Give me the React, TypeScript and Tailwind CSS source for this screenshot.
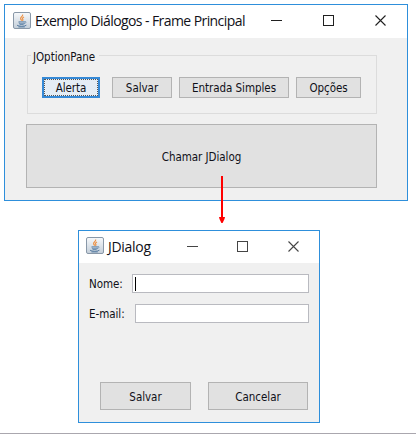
import type { ReactNode } from 'react';

function JavaIcon() {
  return (
    <svg width="18" height="18" viewBox="0 0 18 18" className="-mt-0.5 shrink-0">
      <defs>
        <linearGradient id="tile" x1="0" y1="0" x2="0" y2="1">
          <stop offset="0" stopColor="#f7f9fb" />
          <stop offset="1" stopColor="#c3ced9" />
        </linearGradient>
      </defs>
      <rect x="0.5" y="0.5" width="17" height="16" rx="1.5" fill="url(#tile)" stroke="#8998a8" />
      <path d="M9.6 2.5C10.4 4.3 7 5 7.6 6.8 7.8 7.6 8.6 8 8.6 8.8M11 5C9.4 5.8 9 6.6 9.8 7.4 10.1 7.9 9.9 8.4 9.5 8.8" fill="none" stroke="#ee9246" strokeWidth="1.2" />
      <path d="M5.5 9.3h6.2c0 1.6-.6 3-1.4 3.6H7c-.9-.6-1.5-2-1.5-3.6z" fill="#6f8faf" />
      <path d="M11.5 9.6c2.2-.6 2 1.5-.5 2.2" fill="none" stroke="#6f8faf" strokeWidth="0.9" />
      <path d="M4 13.2c1.8 1.4 7.6 1.4 9.4 0M5.4 14.9h6.4" fill="none" stroke="#5b7fa4" strokeWidth="1" />
      <path d="M6.3 10.8h4.6" stroke="#dbe5ee" strokeWidth="0.6" />
    </svg>
  );
}

function Controls({ light }: { light?: boolean }) {
  const c = light ? '#454545' : '#202020';
  return (
    <svg width="116" height="12" viewBox="0 0 116 12" fill="none" stroke={c} className="-mt-px shrink-0">
      <path d="M0 5.5h11" />
      <rect x={light ? 50.5 : 52.5} y="0.5" width="10" height="10" />
      <path d={light ? 'M101.5 0.5l10 10m0-10l-10 10' : 'M104.5 0.5l10 10m0-10l-10 10'} strokeWidth="1.1" />
    </svg>
  );
}

function Button({ className, children }: { className: string; children: ReactNode }) {
  return (
    <button className={`flex shrink-0 items-center justify-center border border-[#b3b3b3] bg-[#e1e1e1] pt-px whitespace-nowrap ${className}`}>
      {children}
    </button>
  );
}

export default function App() {
  return (
    <main className="relative flex h-[434px] w-[416px] flex-col overflow-hidden border-b border-[#aaa7ae] bg-white pt-1 font-['DejaVu_Sans_Condensed','DejaVu_Sans',sans-serif] text-[11.5px] leading-[14px] tracking-[-0.04px] text-[#101018] [font-stretch:75%]">
      <section className="ml-1 h-[197px] w-[404px] shrink-0 border border-[#2e8fdb] bg-[#f0f0f0]">
        <header className="flex h-[33px] items-center bg-white pl-2">
          <JavaIcon />
          <h1 className="-mt-0.5 ml-1 w-[236px] font-['Open_Sans',sans-serif] text-[14px] leading-5 tracking-[-0.58px] whitespace-nowrap [font-stretch:100%]">
            Exemplo Diálogos - Frame Principal
          </h1>
          <Controls />
        </header>
        <div className="px-[21px] pt-[17px]">
          <div className="ml-px h-[59px] w-[350px] border border-[#dcdcdc]">
            <h3 className="-mt-[6px] ml-[3px] h-[14px] w-[68px] bg-[#f0f0f0] px-[2px] whitespace-nowrap">JOptionPane</h3>
            <div className="mt-[13px] flex pl-[14px]">
              <button className="h-[21px] w-[58px] shrink-0 border-2 border-[#3589d6] bg-[#e5edf5]">
                <span className="flex h-full items-center justify-center border border-dotted border-[#555] pt-px">Alerta</span>
              </button>
              <Button className="ml-3 h-[21px] w-[60px]">Salvar</Button>
              <Button className="ml-[7px] h-[21px] w-[110px]">Entrada Simples</Button>
              <Button className="ml-[7px] h-[21px] w-[65px]">Opções</Button>
            </div>
          </div>
          <Button className="mt-[10px] h-16 w-[351px]">Chamar JDialog</Button>
        </div>
      </section>

      <section className="mt-[29px] ml-[78px] h-[193px] w-[242px] shrink-0 border border-[#2e8fdb] bg-[#f0f0f0]">
        <header className="flex h-8 items-center bg-white pl-[7px]">
          <JavaIcon />
          <h2 className="ml-1 w-[79px] font-['Open_Sans',sans-serif] text-[14px] leading-5 tracking-[-0.3px] whitespace-nowrap [font-stretch:100%]">JDialog</h2>
          <Controls light />
        </header>
        <div className="flex flex-col pl-[10px]">
          <label className="mt-[11px] flex h-[19px] items-center">
            <span className="w-[43px] shrink-0 pt-px">Nome:</span>
            <span className="flex h-[19px] w-[177px] items-center border border-[#b9bac0] bg-white pl-[2px]">
              <span className="h-[14px] w-px bg-black" />
            </span>
          </label>
          <label className="mt-[11px] flex h-[19px] items-center">
            <span className="w-[46px] shrink-0 pt-px">E-mail:</span>
            <span className="h-[19px] w-[174px] border border-[#b9bac0] bg-white" />
          </label>
          <div className="mt-[59px] ml-[11px] flex gap-[17px]">
            <Button className="h-7 w-[91px]">Salvar</Button>
            <Button className="h-7 w-[100px]">Cancelar</Button>
          </div>
        </div>
      </section>

      <svg className="absolute top-[176px] left-[218px]" width="8" height="48" viewBox="0 0 8 48" fill="#f00">
        <path d="M3 0h2v41h2l-.5 2L4.6 47H3.4L1.5 43 1 41h2z" />
      </svg>
    </main>
  );
}
